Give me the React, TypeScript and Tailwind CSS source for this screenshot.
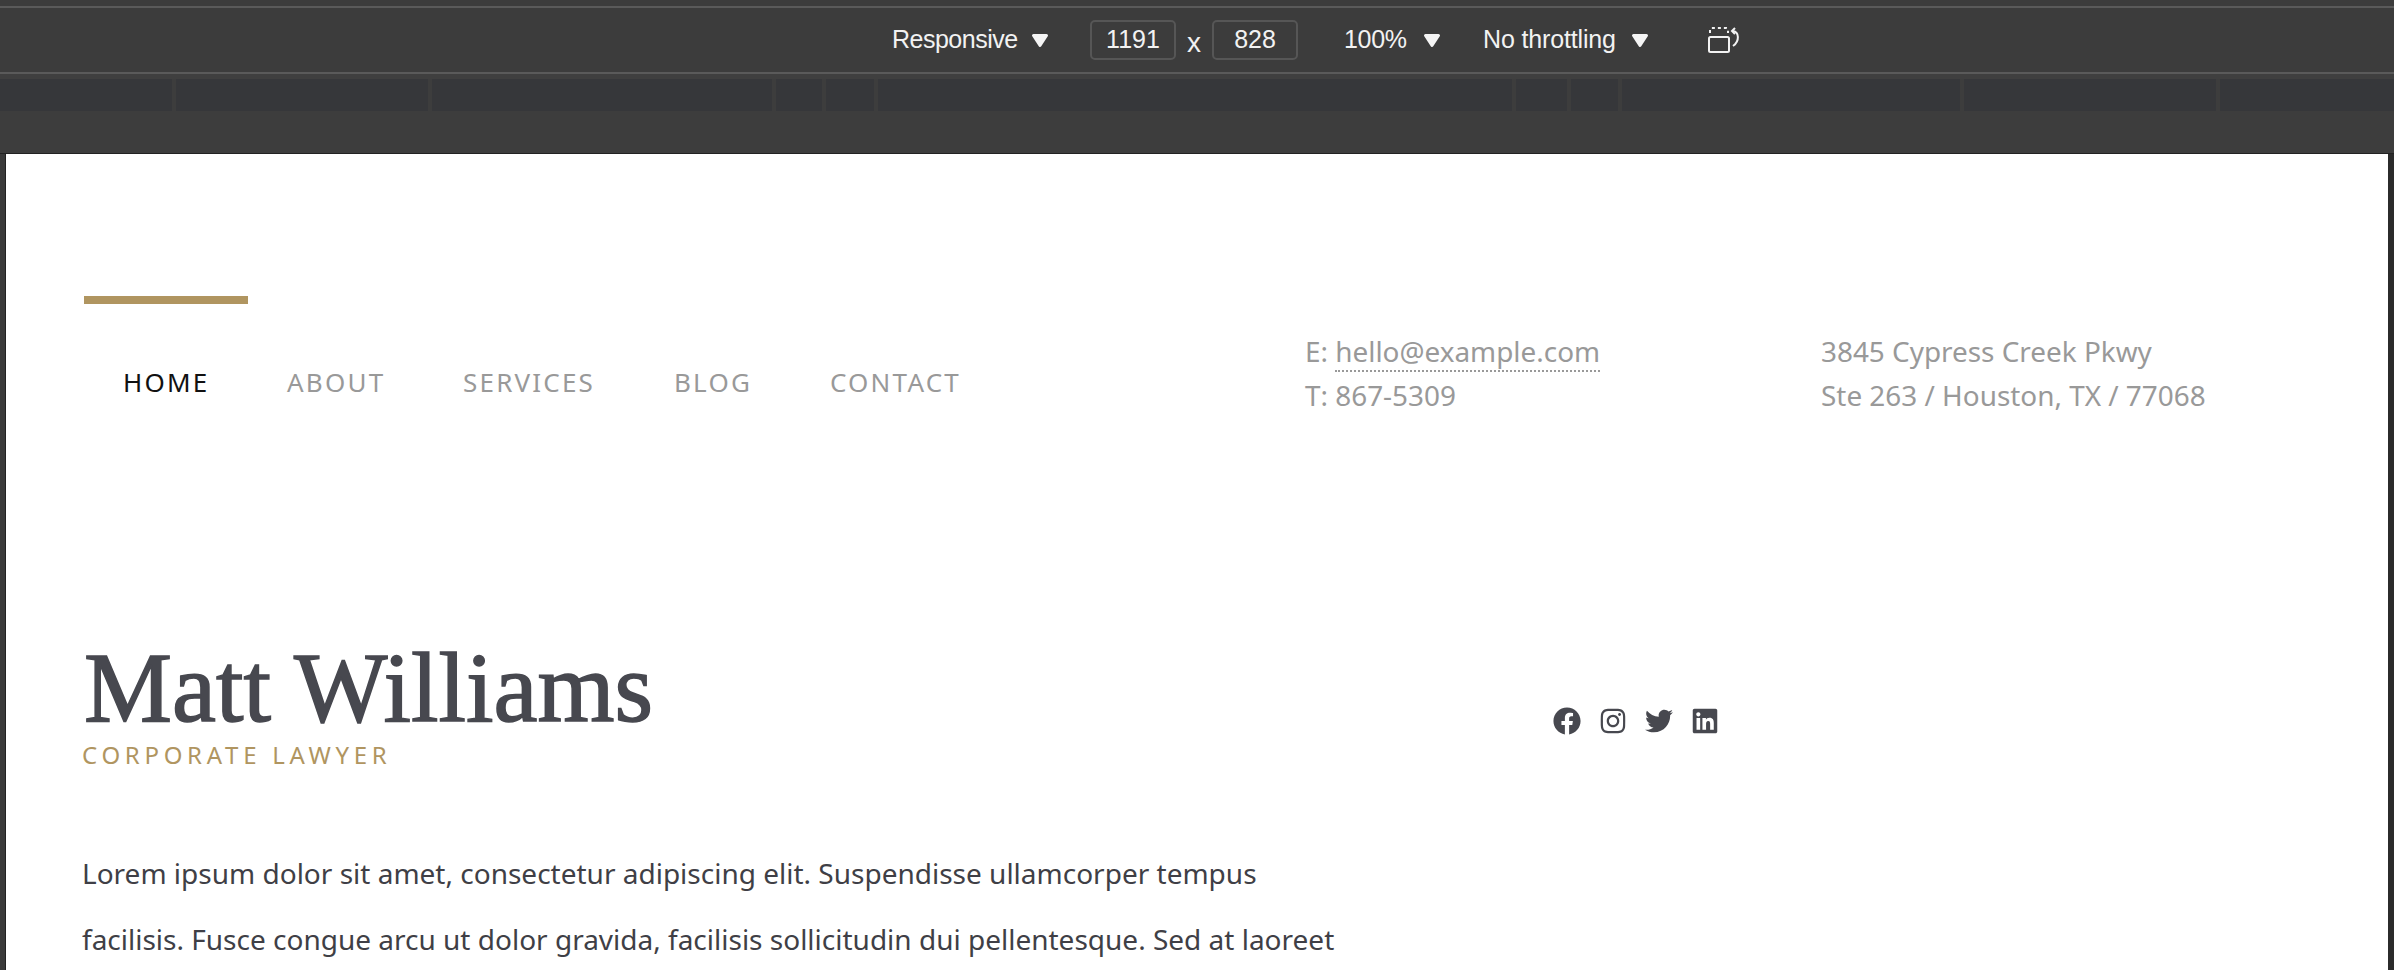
import { FaFacebook, FaInstagram, FaTwitter, FaLinkedin } from "react-icons/fa";

const Tri = () => (
  <svg width="18" height="15" viewBox="0 0 18 15" className="shrink-0">
    <path d="M2.500 2.500 H15.500 L9 12.500 Z" fill="#f5f5f5" stroke="#f5f5f5" strokeWidth="3" strokeLinejoin="round" />
  </svg>
);

const seps = [176, 256, 344, 50, 52, 638, 55, 51, 342, 256];

export default function App() {
  return (
    <div className="w-[2394px] h-[970px] overflow-hidden bg-[#3c3c3c] flex flex-col font-['Noto_Sans',sans-serif]">
      <div className="h-[6px] shrink-0" />
      <div className="h-[2px] shrink-0 bg-[#5a5a5a]" />
      <div className="h-[64px] shrink-0 flex items-center pl-[892px] text-[25px] text-[#f2f2f2] font-['Liberation_Sans',sans-serif]">
        <span className="w-[125px] tracking-[-0.5px]">Responsive</span>
        <span className="ml-[14px]"><Tri /></span>
        <span className="ml-[41px] w-[86px] h-[40px] rounded-[5px] border-2 border-[#565656] flex items-center justify-center">1191</span>
        <span className="w-[36px] text-center text-[28px] pt-[5px]">x</span>
        <span className="w-[86px] h-[40px] rounded-[5px] border-2 border-[#565656] flex items-center justify-center">828</span>
        <span className="ml-[46px] w-[62px] tracking-[-0.3px]">100%</span>
        <span className="ml-[17px]"><Tri /></span>
        <span className="ml-[42px] w-[133px] tracking-[-0.15px] whitespace-nowrap">No throttling</span>
        <span className="ml-[15px]"><Tri /></span>
        <svg className="ml-[59px]" width="34" height="26" viewBox="0 0 34 26" fill="none" stroke="#f2f2f2" strokeWidth="2">
          <rect x="1" y="10" width="20" height="15" rx="1.5" />
          <path d="M2 6V2.500A1.500 1.500 0 0 1 3.500 1H18.500A1.500 1.500 0 0 1 20 2.500V6" strokeDasharray="3 3" />
          <path d="M25 4c6 1 7 10 0 15" />
          <path d="M27 1l-3 3 3 3" />
        </svg>
      </div>
      <div className="h-[2px] shrink-0 bg-[#5a5a5a]" />
      <div className="h-[5px] shrink-0 bg-[#3f3f3f]" />
      <div className="h-[32px] shrink-0 flex bg-[#36373a]">
        {seps.map((w, i) => (
          <div key={i} className="h-full border-r-4 border-[#3d3d3d]" style={{ width: w }} />
        ))}
      </div>
      <div className="h-[42px] shrink-0 bg-[#3d3d3d]" />
      <div className="flex-1 min-h-0 flex border-t border-[#222]">
        <div className="w-[6px] shrink-0 bg-[#3a3a3a] border-r border-[#222]" />
        <div className="flex-1 min-w-0 bg-white overflow-hidden pl-[78px]">
          <div className="mt-[142px] w-[164px] h-[8px] bg-[#b09560]" />
          <div className="mt-[25px] flex h-[106px]">
            <nav className="flex items-center h-[106px] pl-[39px] w-[1221px] text-[26px] leading-none uppercase tracking-[2.2px] text-[#999]">
              <span className="text-[#111] w-[164px] shrink-0">Home</span>
              <span className="w-[176px] shrink-0">About</span>
              <span className="w-[211px] shrink-0">Services</span>
              <span className="w-[156px] shrink-0">Blog</span>
              <span className="shrink-0">Contact</span>
            </nav>
            <div className="w-[516px] text-[27.9px] leading-[44px] text-[#999] shrink-0">
              <div>
                E: <span className="border-b-2 border-dotted border-[#999] inline-block leading-[38px]">hello@example.com</span>
              </div>
              <div>T: 867-5309</div>
            </div>
            <div className="text-[27.9px] leading-[44px] text-[#999] whitespace-nowrap">
              <div>3845 Cypress Creek Pkwy</div>
              <div>Ste 263 / Houston, TX / 77068</div>
            </div>
          </div>
          <div className="mt-[204px] flex">
            <div className="w-[1469px] shrink-0">
              <h1 className="font-['Liberation_Serif',serif] text-[99px] leading-[98px] text-[#47484f] [-webkit-text-stroke:1.5px_#47484f]">Matt Williams</h1>
              <div className="mt-[3px] -ml-[2px] text-[24px] leading-[30px] uppercase tracking-[4.7px] text-[#b09560]">Corporate Lawyer</div>
            </div>
            <div className="mt-[68px] flex items-start gap-[18px] text-[28px] text-[#47484f]">
              <FaFacebook />
              <FaInstagram />
              <FaTwitter />
              <FaLinkedin />
            </div>
          </div>
          <p className="mt-[70px] -ml-[2px] w-[1270px] text-[28px] leading-[66px] text-[#3f3f46]">
            Lorem ipsum dolor sit amet, consectetur adipiscing elit. Suspendisse ullamcorper tempus facilisis. Fusce congue arcu ut dolor gravida, facilisis sollicitudin dui pellentesque. Sed at laoreet
          </p>
        </div>
        <div className="w-[6px] shrink-0 bg-[#2b2b2b]" />
      </div>
    </div>
  );
}
